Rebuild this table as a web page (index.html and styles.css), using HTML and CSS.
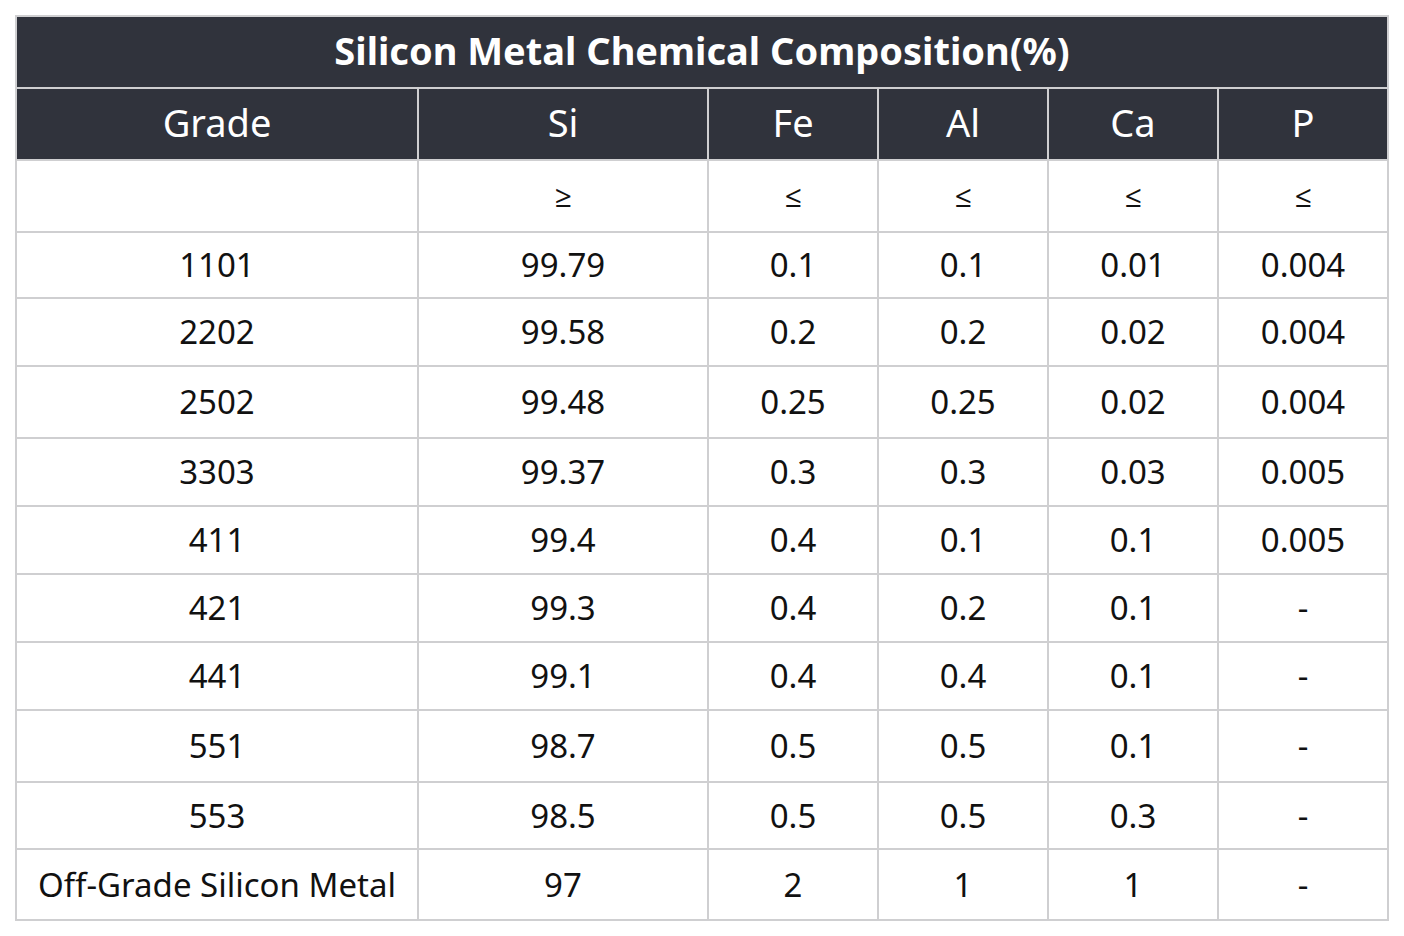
FILE: index.html
```html
<!DOCTYPE html>
<html>
<head>
<meta charset="utf-8">
<link rel="stylesheet" href="styles.css">
</head>
<body>
<table class="comp">
  <colgroup>
    <col class="c-grade"><col class="c-si"><col class="c-el"><col class="c-el"><col class="c-el"><col class="c-el">
  </colgroup>
  <thead>
    <tr class="r72 title"><th colspan="6">Silicon Metal Chemical Composition(%)</th></tr>
    <tr class="r72 head"><th>Grade</th><th>Si</th><th>Fe</th><th>Al</th><th>Ca</th><th>P</th></tr>
  </thead>
  <tbody>
    <tr class="r72 sym"><td></td><td>≥</td><td>≤</td><td>≤</td><td>≤</td><td>≤</td></tr>
    <tr class="r66"><td>1101</td><td>99.79</td><td>0.1</td><td>0.1</td><td>0.01</td><td>0.004</td></tr>
    <tr class="r68"><td>2202</td><td>99.58</td><td>0.2</td><td>0.2</td><td>0.02</td><td>0.004</td></tr>
    <tr class="r72"><td>2502</td><td>99.48</td><td>0.25</td><td>0.25</td><td>0.02</td><td>0.004</td></tr>
    <tr class="r68"><td>3303</td><td>99.37</td><td>0.3</td><td>0.3</td><td>0.03</td><td>0.005</td></tr>
    <tr class="r68"><td>411</td><td>99.4</td><td>0.4</td><td>0.1</td><td>0.1</td><td>0.005</td></tr>
    <tr class="r68"><td>421</td><td>99.3</td><td>0.4</td><td>0.2</td><td>0.1</td><td>-</td></tr>
    <tr class="r68"><td>441</td><td>99.1</td><td>0.4</td><td>0.4</td><td>0.1</td><td>-</td></tr>
    <tr class="r72"><td>551</td><td>98.7</td><td>0.5</td><td>0.5</td><td>0.1</td><td>-</td></tr>
    <tr class="r67"><td>553</td><td>98.5</td><td>0.5</td><td>0.5</td><td>0.3</td><td>-</td></tr>
    <tr class="r71"><td>Off-Grade Silicon Metal</td><td>97</td><td>2</td><td>1</td><td>1</td><td>-</td></tr>
  </tbody>
</table>
</body>
</html>
```
FILE: styles.css
```css
html, body {
  margin: 0;
  padding: 0;
  background: #ffffff;
}
body {
  padding: 15px 0 0 15px;
  font-family: "Noto Sans", "Open Sans", sans-serif;
}
.comp {
  border-collapse: collapse;
  table-layout: fixed;
  width: 1374px;
  color: #111111;
}
.c-grade { width: 402px; }
.c-si { width: 290px; }
.c-el { width: 170px; }
.comp th, .comp td {
  border: 2px solid #cfcfd1;
  text-align: center;
  padding: 0;
  font-size: 33px;
  font-weight: 400;
  line-height: 1.2;
}
.comp thead th {
  background: #30333c;
  color: #ffffff;
}
.comp .title th {
  font-size: 38px;
  font-weight: 700;
  padding-bottom: 2px;
}
.comp .head th {
  font-size: 38px;
  padding-bottom: 2px;
}
.comp .sym td {
  font-size: 30px;
}
.r72 { height: 72px; }
.r71 { height: 71px; }
.r68 { height: 68px; }
.r67 { height: 67px; }
.r66 { height: 66px; }
```
